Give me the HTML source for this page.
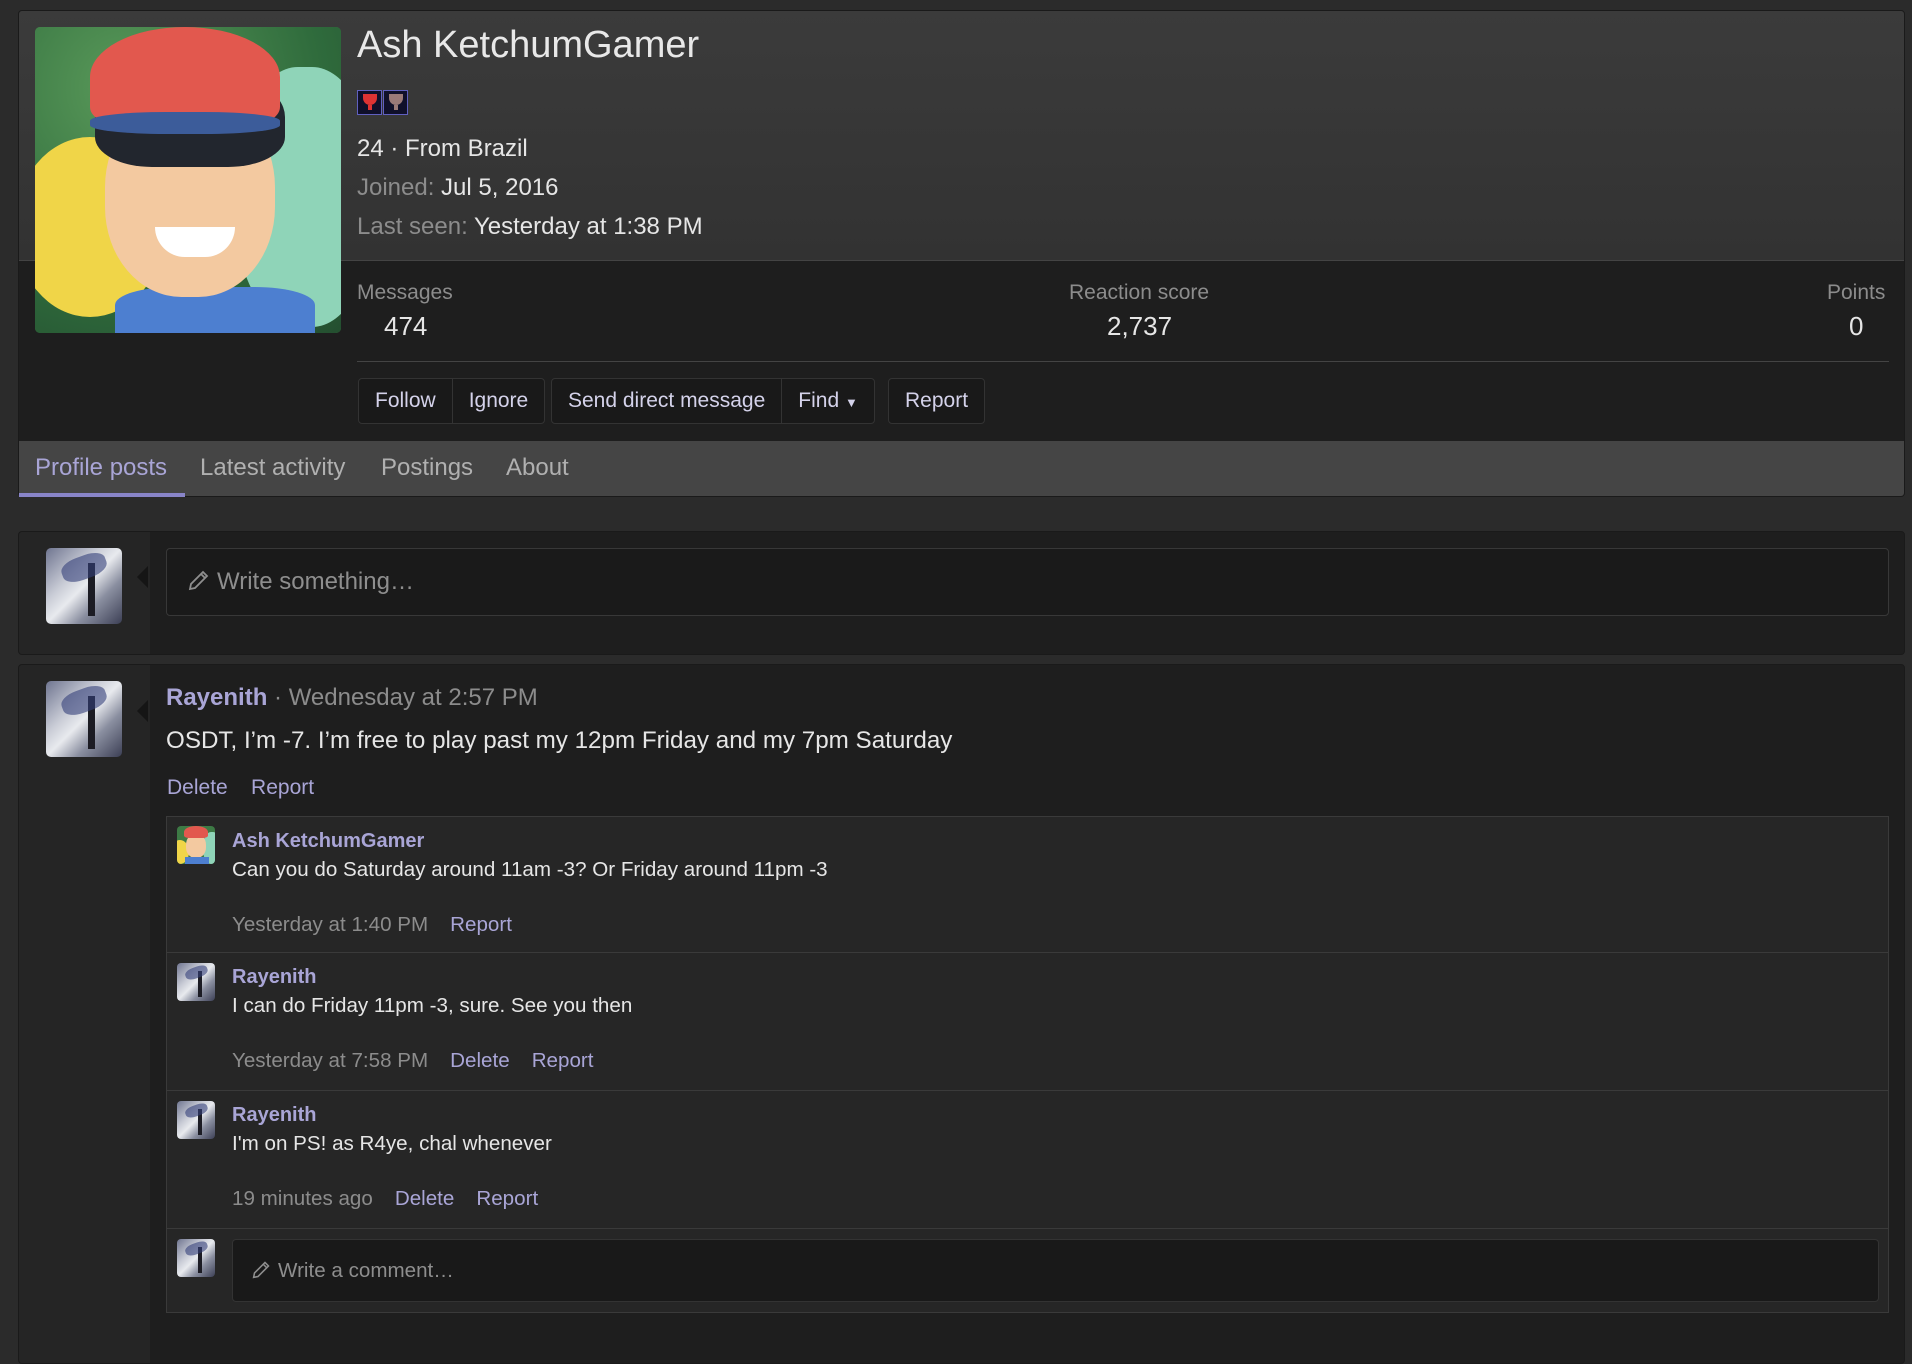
<!DOCTYPE html>
<html><head><meta charset="utf-8"><style>
*{box-sizing:border-box;margin:0;padding:0}
body{width:1912px;height:1328px;background:#2b2b2b;font-family:"Liberation Sans",Arial,sans-serif;color:#e6e6e6;overflow:hidden;position:relative}
.a{position:absolute}
.link{color:#a9a5d6}
.mut{color:#8c8c8c}
.ray{background:linear-gradient(135deg,#6f7590 0%,#c9ccd6 35%,#e8eaee 50%,#8a8fa0 70%,#3c3f55 100%);border-radius:5px;overflow:hidden}
.ray:after{content:"";position:absolute;left:20%;top:10%;width:60%;height:30%;background:#34407a;opacity:.6;transform:rotate(-20deg);border-radius:40%}
.ray:before{content:"";position:absolute;left:55%;top:20%;width:10%;height:70%;background:#1c1c24}
.ash{background:#3d7a45;overflow:hidden}
.btn{position:absolute;top:378px;height:46px;border:1px solid #333;background:#191919;border-radius:4px;display:flex}
.btn span{display:block;padding:0 16px;line-height:44px;font-size:21px;color:#d4d2ea;border-right:1px solid #333}
.btn span:last-child{border-right:none}
.cm{position:absolute;left:167px;width:1722px;border-bottom:1px solid #3a3a3a}
.cm .ray{position:absolute;left:10px;top:10px;width:38px;height:38px;border-radius:4px}
.meta span{margin-right:22px}
svg.pen{vertical-align:-3px;margin-right:6px}
</style></head><body>
<div class="a" style="left:18px;top:10px;width:1887px;height:487px;border:1px solid #1a1a1a;border-radius:4px;overflow:hidden;background:#1e1e1e">
 <div class="a" style="left:0;top:0;width:100%;height:250px;background:linear-gradient(#3b3b3b,#323232);border-bottom:1px solid #444"></div>
 <div class="a" style="left:0;top:430px;width:100%;height:56px;background:#454545"></div>
</div>
<div class="a ash" style="left:35px;top:27px;width:306px;height:306px;border-radius:5px">
 <div class="a" style="left:0;top:0;width:306px;height:306px;background:radial-gradient(circle at 30% 20%,#5a9a5a,#2f6b3c 60%,#244f30)"></div>
 <div class="a" style="left:-20px;top:110px;width:150px;height:180px;background:#f0d548;border-radius:50%"></div>
 <div class="a" style="left:200px;top:40px;width:140px;height:260px;background:#8fd4b8;border-radius:45%"></div>
 <div class="a" style="left:80px;top:260px;width:200px;height:60px;background:#4d7fd0;border-radius:30% 30% 0 0"></div>
 <div class="a" style="left:70px;top:70px;width:170px;height:200px;background:#f3c9a0;border-radius:45%"></div>
 <div class="a" style="left:60px;top:40px;width:190px;height:100px;background:#22262e;border-radius:50% 50% 30% 30%"></div>
 <div class="a" style="left:55px;top:0;width:190px;height:100px;background:#e2584e;border-radius:50% 50% 20% 20%"></div>
 <div class="a" style="left:55px;top:85px;width:190px;height:22px;background:#3c5c9a;border-radius:40%"></div>
 <div class="a" style="left:120px;top:200px;width:80px;height:30px;background:#fff;border-radius:0 0 40px 40px"></div>
</div>
<div class="a" style="left:357px;top:24px;font-size:38px;color:#e8e8e8">Ash KetchumGamer</div>
<div class="a" style="left:357px;top:90px;width:25px;height:25px;background:#10102a;border:1px solid #6060c0"><div style="margin:3px auto 0;width:14px;height:11px;background:#d33;border-radius:0 0 7px 7px"></div><div style="margin:0 auto;width:4px;height:5px;background:#d33"></div></div>
<div class="a" style="left:383px;top:90px;width:25px;height:25px;background:#10102a;border:1px solid #6060c0"><div style="margin:3px auto 0;width:14px;height:11px;background:#9a7a78;border-radius:0 0 7px 7px"></div><div style="margin:0 auto;width:4px;height:5px;background:#9a7a78"></div></div>
<div class="a" style="left:357px;top:135px;font-size:24px">24 · From Brazil</div>
<div class="a" style="left:357px;top:174px;font-size:24px"><span class="mut">Joined:</span> Jul 5, 2016</div>
<div class="a" style="left:357px;top:213px;font-size:24px"><span class="mut">Last seen:</span> Yesterday at 1:38 PM</div>
<div class="a mut" style="left:357px;top:281px;font-size:21px">Messages</div>
<div class="a" style="left:384px;top:311px;font-size:26px">474</div>
<div class="a mut" style="left:1069px;top:281px;font-size:21px">Reaction score</div>
<div class="a" style="left:1107px;top:311px;font-size:26px">2,737</div>
<div class="a mut" style="left:1827px;top:281px;font-size:21px">Points</div>
<div class="a" style="left:1849px;top:311px;font-size:26px">0</div>
<div class="a" style="left:357px;top:361px;width:1532px;height:1px;background:#444"></div>
<div class="btn" style="left:358px"><span>Follow</span><span>Ignore</span></div>
<div class="btn" style="left:551px"><span>Send direct message</span><span>Find <small style="font-size:13px">▼</small></span></div>
<div class="btn" style="left:888px"><span>Report</span></div>
<div class="a" style="left:35px;top:454px;font-size:24px;color:#a9a5d6">Profile posts</div>
<div class="a" style="left:200px;top:454px;font-size:24px;color:#b0b0b0">Latest activity</div>
<div class="a" style="left:381px;top:454px;font-size:24px;color:#b0b0b0">Postings</div>
<div class="a" style="left:506px;top:454px;font-size:24px;color:#b0b0b0">About</div>
<div class="a" style="left:19px;top:493px;width:166px;height:4px;background:#8985c9"></div>

<div class="a" style="left:18px;top:531px;width:1887px;height:124px;background:#1e1e1e;border:1px solid #1a1a1a;border-radius:4px;overflow:hidden">
 <div class="a" style="left:0;top:0;width:131px;height:124px;background:#252525"></div>
</div>
<div class="a ray" style="left:46px;top:548px;width:76px;height:76px"></div>
<div class="a" style="left:137px;top:566px;border:11px solid transparent;border-right-color:#151515;border-left:0"></div>
<div class="a" style="left:166px;top:548px;width:1723px;height:68px;background:#1a1a1a;border:1px solid #383838;border-radius:4px;font-size:24px;color:#8e8e8e;line-height:66px;padding-left:20px"><svg class="pen" width="24" height="24" viewBox="0 0 24 24" fill="none" stroke="#8e8e8e" stroke-width="1.8"><path d="M3 21l1-5L16 4l4 4L8 20z M14 6l4 4"/></svg>Write something…</div>

<div class="a" style="left:18px;top:664px;width:1887px;height:700px;background:#1e1e1e;border:1px solid #1a1a1a;border-radius:4px;overflow:hidden">
 <div class="a" style="left:0;top:0;width:131px;height:700px;background:#252525"></div>
</div>
<div class="a ray" style="left:46px;top:681px;width:76px;height:76px"></div>
<div class="a" style="left:137px;top:700px;border:11px solid transparent;border-right-color:#151515;border-left:0"></div>
<div class="a" style="left:166px;top:684px;font-size:24px"><b class="link">Rayenith</b> <span class="mut">· Wednesday at 2:57 PM</span></div>
<div class="a" style="left:166px;top:727px;font-size:24.2px">OSDT, I’m -7. I’m free to play past my 12pm Friday and my 7pm Saturday</div>
<div class="a link" style="left:167px;top:776px;font-size:21px">Delete&nbsp;&nbsp;&nbsp;&nbsp;Report</div>

<div class="a" style="left:166px;top:816px;width:1723px;height:497px;background:#262626;border:1px solid #3a3a3a"></div>
<div class="cm" style="top:816px;height:137px">
 <div class="a" style="left:10px;top:10px;width:38px;height:38px;border-radius:4px;overflow:hidden;background:#3d7a45">
  <div class="a" style="left:-6px;top:14px;width:18px;height:24px;background:#f0d548;border-radius:50%"></div>
  <div class="a" style="left:26px;top:6px;width:18px;height:32px;background:#8fd4b8;border-radius:45%"></div>
  <div class="a" style="left:9px;top:8px;width:20px;height:24px;background:#f3c9a0;border-radius:45%"></div>
  <div class="a" style="left:7px;top:0;width:24px;height:12px;background:#e2584e;border-radius:50% 50% 20% 20%"></div>
  <div class="a" style="left:8px;top:31px;width:24px;height:8px;background:#4d7fd0"></div>
 </div>
 <div class="a link" style="left:65px;top:14px;font-size:20px;font-weight:bold">Ash KetchumGamer</div>
 <div class="a" style="left:65px;top:42px;font-size:20.6px">Can you do Saturday around 11am -3? Or Friday around 11pm -3</div>
 <div class="a meta" style="left:65px;top:97px;font-size:20.6px"><span class="mut">Yesterday at 1:40 PM</span><span class="link">Report</span></div>
</div>
<div class="cm" style="top:953px;height:138px">
 <div class="ray"></div>
 <div class="a link" style="left:65px;top:13px;font-size:20px;font-weight:bold">Rayenith</div>
 <div class="a" style="left:65px;top:41px;font-size:20.6px">I can do Friday 11pm -3, sure. See you then</div>
 <div class="a meta" style="left:65px;top:96px;font-size:20.6px"><span class="mut">Yesterday at 7:58 PM</span><span class="link">Delete</span><span class="link">Report</span></div>
</div>
<div class="cm" style="top:1091px;height:138px">
 <div class="ray"></div>
 <div class="a link" style="left:65px;top:13px;font-size:20px;font-weight:bold">Rayenith</div>
 <div class="a" style="left:65px;top:41px;font-size:20.6px">I'm on PS! as R4ye, chal whenever</div>
 <div class="a meta" style="left:65px;top:96px;font-size:20.6px"><span class="mut">19 minutes ago</span><span class="link">Delete</span><span class="link">Report</span></div>
</div>
<div class="cm" style="top:1229px;height:84px;border-bottom:none">
 <div class="ray"></div>
 <div class="a" style="left:65px;top:10px;width:1647px;height:63px;background:#191919;border:1px solid #333;border-radius:4px;font-size:20.6px;color:#8e8e8e;line-height:61px;padding-left:18px"><svg class="pen" width="21" height="21" viewBox="0 0 24 24" fill="none" stroke="#8e8e8e" stroke-width="1.8"><path d="M3 21l1-5L16 4l4 4L8 20z M14 6l4 4"/></svg>Write a comment…</div>
</div>
</body></html>
